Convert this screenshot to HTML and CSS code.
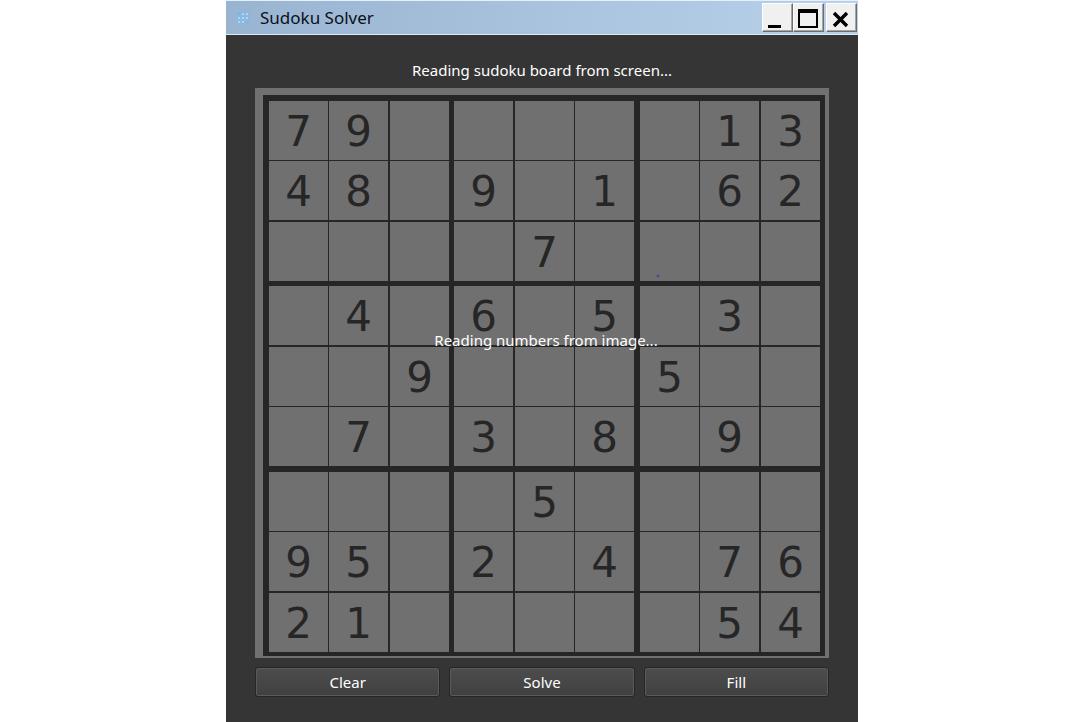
FILE: index.html
```html
<!DOCTYPE html>
<html lang="en">
<head>
<meta charset="utf-8">
<title>Sudoku Solver</title>
<link rel="stylesheet" href="styles.css">
</head>
<body>
<div class="window">
  <header class="titlebar">
    <svg class="app-icon" viewBox="0 0 12 12" aria-hidden="true">
      <rect width="12" height="12" rx="2" fill="#7fb6e2"/>
      <path d="M4 0v12M8 0v12M0 4h12M0 8h12" stroke="#94bbdf" stroke-width="1"/>
      <path d="M5 1h2v2H5zM1 5h2v2H1zM5 5h2v2H5zM9 5h2v2H9zM5 9h2v2H5zM9 1h2v2H9zM1 9h2v2H1z" fill="#a9d8f2"/>
    </svg>
    <h1 class="title">Sudoku Solver</h1>
    <div class="controls">
      <button class="control" type="button" aria-label="Minimize"><svg viewBox="0 0 28 26"><path d="M5 20h13v3H5z"/></svg></button>
      <button class="control" type="button" aria-label="Maximize"><svg viewBox="0 0 28 26"><path fill-rule="evenodd" d="M4 4h20v19H4zM6 8v13h16V8z"/></svg></button>
      <button class="control close" type="button" aria-label="Close"><svg viewBox="0 0 28 26"><path d="M7 8l13 13M20 8L7 21" stroke="#000" stroke-width="3.4"/></svg></button>
    </div>
  </header>
  <main class="content">
    <p class="status">Reading sudoku board from screen...</p>
    <section class="board">
      <div class="grid">
        <div class="row"><span>7</span><span>9</span><span></span><span></span><span></span><span></span><span></span><span>1</span><span>3</span></div>
        <div class="row"><span>4</span><span>8</span><span></span><span>9</span><span></span><span>1</span><span></span><span>6</span><span>2</span></div>
        <div class="row"><span></span><span></span><span></span><span></span><span>7</span><span></span><span class="speck"></span><span></span><span></span></div>
        <div class="row"><span></span><span>4</span><span></span><span>6</span><span></span><span>5</span><span></span><span>3</span><span></span></div>
        <div class="row"><span></span><span></span><span>9</span><span></span><span></span><span></span><span>5</span><span></span><span></span></div>
        <div class="row"><span></span><span>7</span><span></span><span>3</span><span></span><span>8</span><span></span><span>9</span><span></span></div>
        <div class="row"><span></span><span></span><span></span><span></span><span>5</span><span></span><span></span><span></span><span></span></div>
        <div class="row"><span>9</span><span>5</span><span></span><span>2</span><span></span><span>4</span><span></span><span>7</span><span>6</span></div>
        <div class="row"><span>2</span><span>1</span><span></span><span></span><span></span><span></span><span></span><span>5</span><span>4</span></div>
      </div>
      <p class="overlay">Reading numbers from image...</p>
    </section>
    <div class="actions">
      <button class="action" type="button">Clear</button>
      <button class="action" type="button">Solve</button>
      <button class="action" type="button">Fill</button>
    </div>
  </main>
</div>
</body>
</html>
```
FILE: styles.css
```css
* { box-sizing: border-box; }

body {
  margin: 0;
  background: #fff;
  font: 15px/22px "Noto Sans", "Open Sans", sans-serif;
}

.window {
  display: flex;
  flex-direction: column;
  max-width: 632px;
  min-height: 100vh;
  margin: 0 auto;
  background: #353535;
}

.titlebar {
  display: flex;
  align-items: center;
  height: 35px;
  padding: 0 1px 0 11px;
  border-top: 1px solid #e4f0fa;
  border-bottom: 1px solid #dce9f6;
  background: linear-gradient(90deg, #99b4d1, #b9d1ea);
}

.app-icon { width: 12px; height: 12px; }

.title {
  flex: 1;
  margin: 0 0 0 11px;
  color: #0a1018;
  font: 17px/24px "Noto Sans", "Open Sans", sans-serif;
}

.controls { display: flex; }

.control {
  width: 31px;
  height: 29px;
  padding: 0;
  border: 1px solid;
  border-color: #fff #6d6d6d #6d6d6d #fff;
  background: #f0f0f0;
  box-shadow: inset -1px -1px #a5a5a5;
}

.control svg { display: block; width: 28px; height: 26px; }

.close { margin-left: 2px; }

.content { padding: 24px 29px; }

.status {
  margin: 0 0 7px;
  color: #fff;
  text-align: center;
}

.board {
  position: relative;
  padding: 7px 4px 2px 8px;
  background: #707070;
}

.grid {
  padding: 6px 5px 4px 6px;
  background: #262626;
}

.row { display: flex; margin-top: 1px; }
.row:first-child { margin-top: 0; }
.row:nth-child(3), .row:nth-child(5), .row:nth-child(9) { margin-top: 2px; }
.row:nth-child(4) { margin-top: 5px; }
.row:nth-child(7) { margin-top: 6px; }

.row span {
  flex: 1 1 0;
  height: 59px;
  margin-left: 1px;
  background: #707070;
  color: #262626;
  font: 42px/61px "DejaVu Sans", sans-serif;
  text-align: center;
}

.row span:first-child { margin-left: 0; }
.row span:nth-child(3), .row span:nth-child(5), .row span:nth-child(9) { margin-left: 2px; }
.row span:nth-child(4) { margin-left: 5px; }
.row span:nth-child(7) { margin-left: 6px; }

.row .speck { background: radial-gradient(circle at 18px 54px, #4a4d85 1px, #707070 2px); }

.overlay {
  position: absolute;
  inset: 0;
  display: flex;
  align-items: center;
  justify-content: center;
  margin: 0;
  padding: 0 0 66px 8px;
  color: #fff;
}

.actions {
  display: grid;
  grid-template-columns: repeat(3, 1fr);
  gap: 9px;
  margin-top: 9px;
}

.action {
  height: 30px;
  padding: 0;
  border: 1px solid #262626;
  border-radius: 3px;
  background: linear-gradient(#4d4d4d, #404040);
  box-shadow: inset 0 0 0 1px #5a5a5a;
  color: #fff;
  font: inherit;
}
```
